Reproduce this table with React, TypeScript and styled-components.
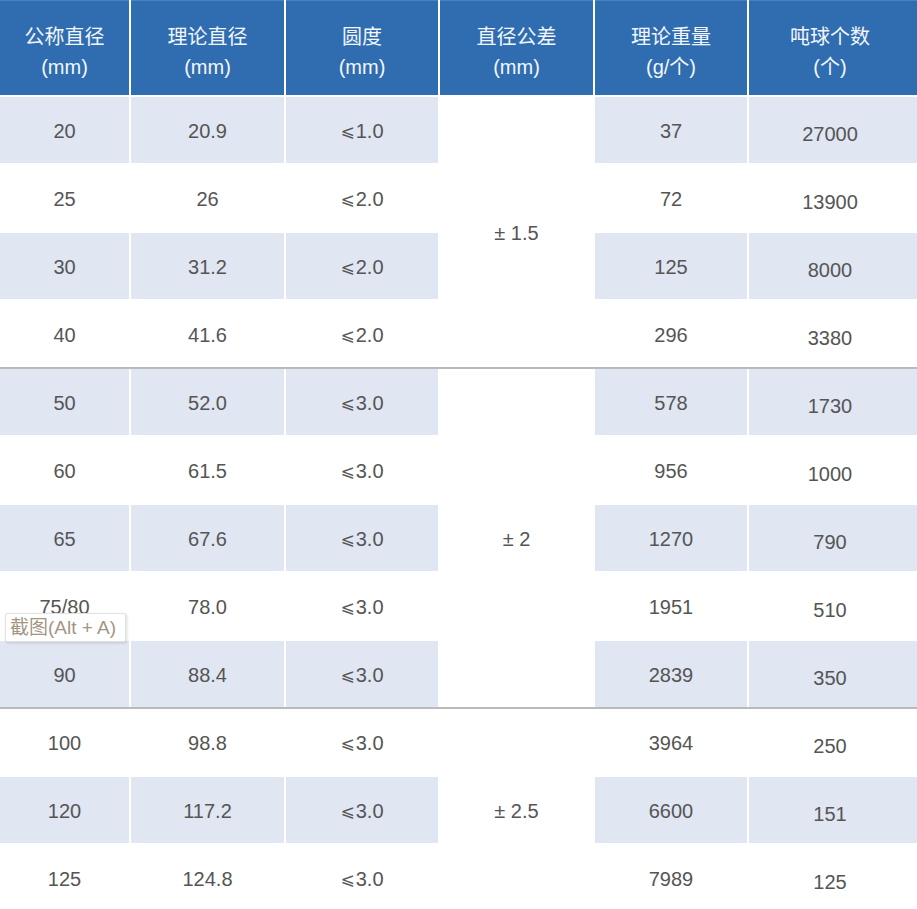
import React from "react";
import styled, { createGlobalStyle } from "styled-components";

const GlobalStyle = createGlobalStyle`
  html, body {
    margin: 0;
    padding: 0;
    background: #ffffff;
  }
  body {
    font-family: "Liberation Sans", Arial, "Noto Sans CJK SC", sans-serif;
  }
`;

const COLS = "129px 153px 152px 153px 152px 1fr";

const Page = styled.div`
  position: relative;
  width: 917px;
  height: 909px;
  overflow: hidden;
  background: #ffffff;
`;

const HeaderRow = styled.div`
  display: grid;
  grid-template-columns: ${COLS};
  column-gap: 2px;
  height: 95px;
  margin-bottom: 2px;
`;

const HeadCell = styled.div<{ $shift?: boolean }>`
  background: #306db0;
  border-top: 1px solid #4a82c0;
  color: #f2f6fb;
  display: flex;
  flex-direction: column;
  align-items: center;
  justify-content: center;
  font-size: 20px;
  line-height: 30px;
  padding-top: 8px;
  padding-right: ${(p) => (p.$shift ? "6px" : "0")};
  box-sizing: border-box;
`;

const Group = styled.div<{ $rows: number; $divider: boolean }>`
  display: grid;
  grid-template-columns: ${COLS};
  grid-template-rows: repeat(${(p) => p.$rows}, 66px);
  column-gap: 2px;
  row-gap: 2px;
  border-top: ${(p) => (p.$divider ? "2px solid #bababa" : "none")};
`;

const Cell = styled.div<{ $shaded: boolean; $low?: boolean }>`
  background: ${(p) => (p.$shaded ? "#e0e6f2" : "#ffffff")};
  color: #555555;
  font-size: 20px;
  display: flex;
  align-items: center;
  justify-content: center;
  padding-top: ${(p) => (p.$low ? "9px" : "2px")};
  padding-right: ${(p) => (p.$low ? "6px" : "0")};
  box-sizing: border-box;
`;

const Le = styled.span`
  font-family: "DejaVu Sans", sans-serif;
  font-size: 17px;
  margin-right: 1px;
`;

const Merged = styled.div`
  grid-column: 4;
  grid-row: 1 / -1;
  background: #ffffff;
  color: #555555;
  font-size: 20px;
  display: flex;
  align-items: center;
  justify-content: center;
  padding-top: 2px;
`;

const Tooltip = styled.div`
  position: absolute;
  left: 5px;
  top: 613px;
  width: 121px;
  height: 29px;
  box-sizing: border-box;
  background: #ffffff;
  border: 1px solid #e2e2e2;
  border-radius: 2px;
  box-shadow: 1px 1px 3px rgba(0, 0, 0, 0.15);
  color: #a39584;
  font-size: 19px;
  line-height: 27px;
  padding-left: 4px;
  white-space: nowrap;
`;

const headers: [string, string][] = [
  ["公称直径", "(mm)"],
  ["理论直径", "(mm)"],
  ["圆度", "(mm)"],
  ["直径公差", "(mm)"],
  ["理论重量", "(g/个)"],
  ["吨球个数", "(个)"],
];

type Row = [string, string, string, string, string];

const groups: { tol: string; rows: Row[] }[] = [
  {
    tol: "± 1.5",
    rows: [
      ["20", "20.9", "1.0", "37", "27000"],
      ["25", "26", "2.0", "72", "13900"],
      ["30", "31.2", "2.0", "125", "8000"],
      ["40", "41.6", "2.0", "296", "3380"],
    ],
  },
  {
    tol: "± 2",
    rows: [
      ["50", "52.0", "3.0", "578", "1730"],
      ["60", "61.5", "3.0", "956", "1000"],
      ["65", "67.6", "3.0", "1270", "790"],
      ["75/80", "78.0", "3.0", "1951", "510"],
      ["90", "88.4", "3.0", "2839", "350"],
    ],
  },
  {
    tol: "± 2.5",
    rows: [
      ["100", "98.8", "3.0", "3964", "250"],
      ["120", "117.2", "3.0", "6600", "151"],
      ["125", "124.8", "3.0", "7989", "125"],
    ],
  },
];

export default function App() {
  let idx = 0;
  return (
    <Page>
      <GlobalStyle />
      <HeaderRow>
        {headers.map(([a, b], i) => (
          <HeadCell key={a} $shift={i === 5}>
            <span>{a}</span>
            <span>{b}</span>
          </HeadCell>
        ))}
      </HeaderRow>
      {groups.map((g, gi) => (
        <Group key={g.tol} $rows={g.rows.length} $divider={gi > 0}>
          <Merged>{g.tol}</Merged>
          {g.rows.map((r) => {
            const shaded = idx % 2 === 0;
            idx += 1;
            return r.map((v, ci) => (
              <Cell key={r[0] + ci} $shaded={shaded} $low={ci === 4}>
                {ci === 2 && <Le>⩽</Le>}
                {v}
              </Cell>
            ));
          })}
        </Group>
      ))}
      <Tooltip>截图(Alt + A)</Tooltip>
    </Page>
  );
}
